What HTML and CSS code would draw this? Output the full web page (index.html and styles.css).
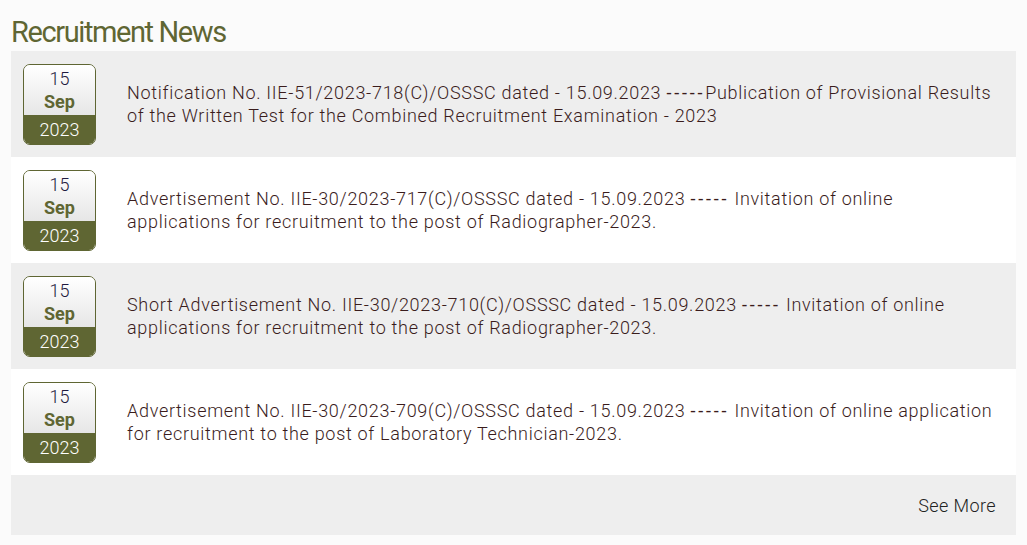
FILE: index.html
```html
<!DOCTYPE html>
<html>
<head>
<meta charset="utf-8">
<link rel="stylesheet" href="styles.css">
</head>
<body>
<div class="wrap">
  <h2 class="title">Recruitment News</h2>
  <div class="list">
    <div class="row">
      <div class="date"><div class="top"><span class="day">15</span><span class="mon">Sep</span></div><div class="year">2023</div></div>
      <div class="text">Notification No. IIE-51/2023-718(C)/OSSSC dated - 15.09.2023 <span class="dash">-----</span>Publication of Provisional Results of the Written Test for the Combined Recruitment Examination - 2023</div>
    </div>
    <div class="row">
      <div class="date"><div class="top"><span class="day">15</span><span class="mon">Sep</span></div><div class="year">2023</div></div>
      <div class="text">Advertisement No. IIE-30/2023-717(C)/OSSSC dated - 15.09.2023 <span class="dash">-----</span> Invitation of online applications for recruitment to the post of Radiographer-2023.</div>
    </div>
    <div class="row">
      <div class="date"><div class="top"><span class="day">15</span><span class="mon">Sep</span></div><div class="year">2023</div></div>
      <div class="text">Short Advertisement No. IIE-30/2023-710(C)/OSSSC dated - 15.09.2023 <span class="dash">-----</span> Invitation of online applications for recruitment to the post of Radiographer-2023.</div>
    </div>
    <div class="row">
      <div class="date"><div class="top"><span class="day">15</span><span class="mon">Sep</span></div><div class="year">2023</div></div>
      <div class="text">Advertisement No. IIE-30/2023-709(C)/OSSSC dated - 15.09.2023 <span class="dash">-----</span> Invitation of online application for recruitment to the post of Laboratory Technician-2023.</div>
    </div>
    <div class="more"><a class="more-link">See More</a></div>
  </div>
</div>
</body>
</html>
```

FILE: styles.css
```css
html, body {
  margin: 0;
  padding: 0;
  background: #fbfbfb;
}
body {
  font-family: Roboto, "Liberation Sans", sans-serif;
}
.wrap {
  padding: 0 11px;
  width: 1005px;
}
.title {
  margin: 0;
  height: 51px;
  box-sizing: border-box;
  padding-top: 15px;
  font-size: 29px;
  line-height: 34px;
  font-weight: 400;
  color: #5f6633;
  letter-spacing: -1.4px;
}
.list {
  display: flex;
  flex-direction: column;
}
.row {
  display: flex;
  align-items: center;
  height: 106px;
  box-sizing: border-box;
  padding: 0 20px 0 12px;
  background: #fff;
}
.row:nth-child(odd) {
  background: #eeeeee;
}
.date {
  flex: 0 0 auto;
  width: 73px;
  height: 81px;
  box-sizing: border-box;
  border: 1px solid #5f6633;
  border-radius: 7px;
  overflow: hidden;
  display: flex;
  flex-direction: column;
  margin-right: 31px;
  margin-top: 1px;
}
.top {
  flex: 1;
  display: flex;
  flex-direction: column;
  align-items: center;
  justify-content: center;
  background: linear-gradient(#ffffff, #e6e6e6);
  padding-top: 1px;
}
.day {
  font-size: 18px;
  line-height: 22px;
  font-weight: 300;
  color: #1f1a40;
}
.mon {
  font-size: 18px;
  line-height: 24px;
  font-weight: 700;
  color: #5f6633;
}
.year {
  height: 29px;
  background: #5f6633;
  color: #fff;
  font-size: 18px;
  line-height: 29px;
  font-weight: 300;
  text-align: center;
}
.text {
  font-size: 18px;
  line-height: 23px;
  color: #3a1c1c;
  font-weight: 300;
  letter-spacing: 0.7px;
}
.dash {
  letter-spacing: 2.8px;
  font-weight: 400;
}
.more {
  height: 60px;
  background: #eeeeee;
  display: flex;
  align-items: center;
  justify-content: flex-end;
  padding-right: 20px;
}
.more-link {
  font-size: 18px;
  font-weight: 300;
  letter-spacing: 0.4px;
  color: #222222;
}
```
